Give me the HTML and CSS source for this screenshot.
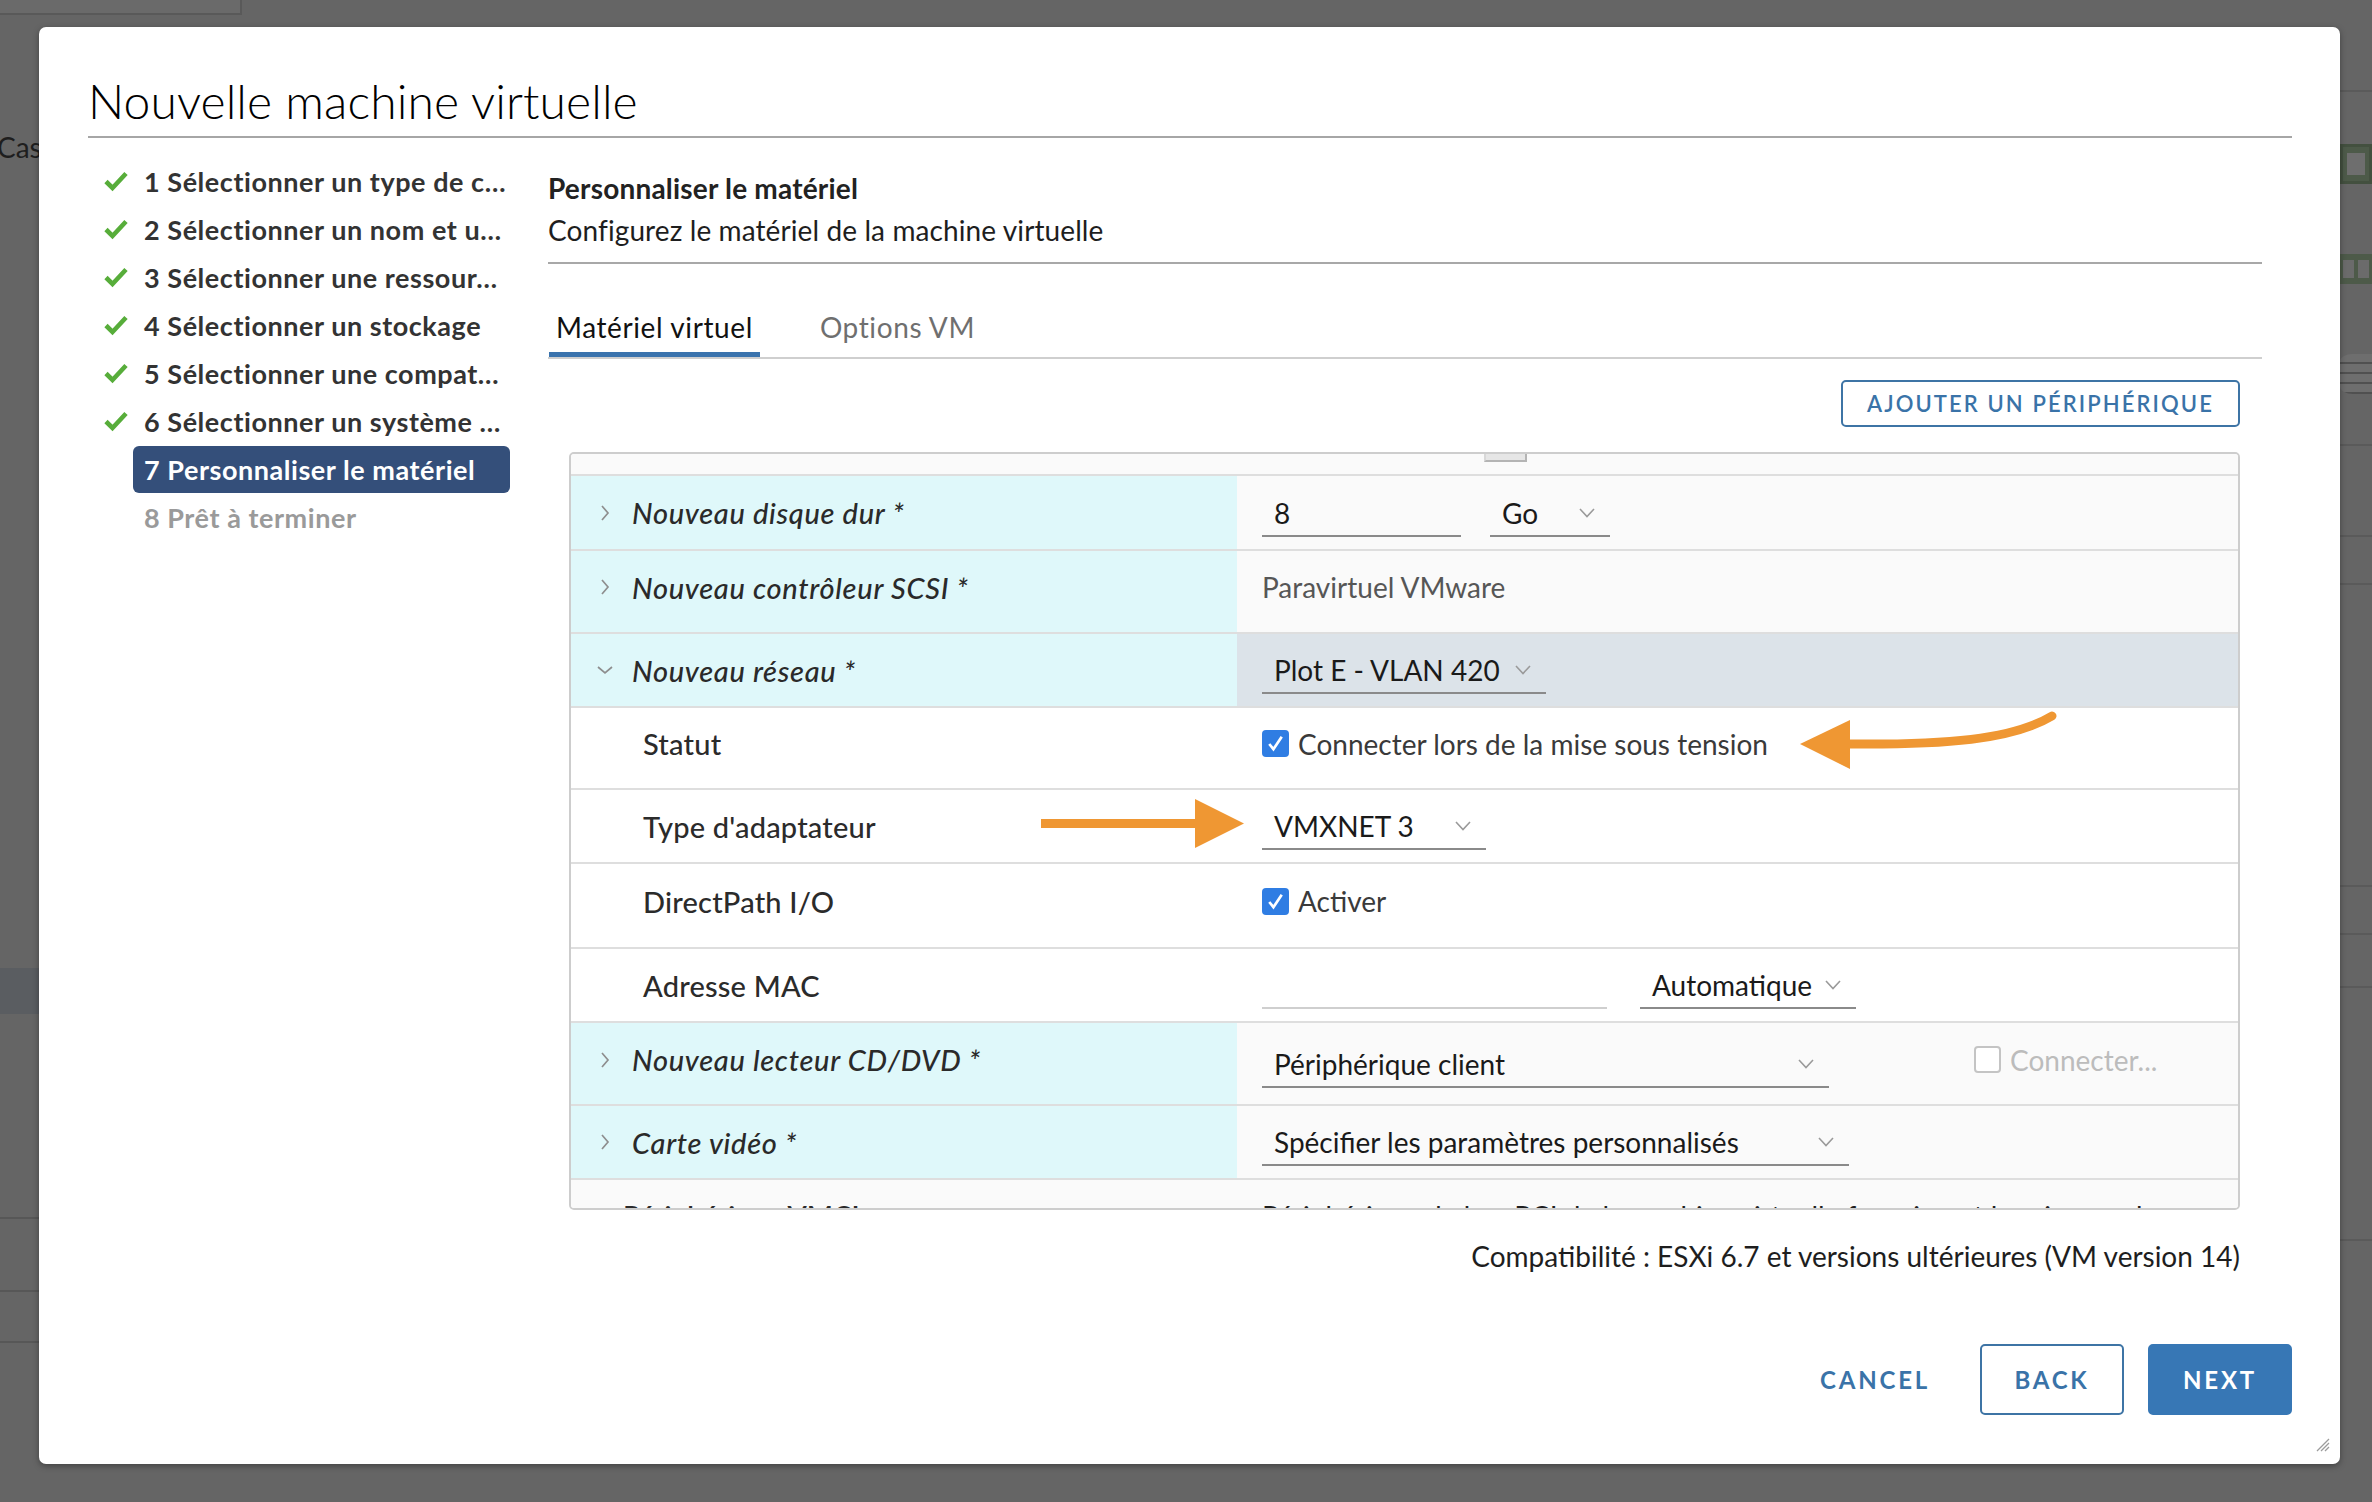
FILE: index.html
```html
<!DOCTYPE html>
<html lang="fr">
<head>
<meta charset="utf-8">
<title>Nouvelle machine virtuelle</title>
<link rel="stylesheet" href="styles.css">
</head>
<body>
<div class="backdrop">
  <div class="bd-left">
    <div class="bd-top"></div>
    <div class="bd-cas">Cas-</div>
    <div class="bd-band"></div>
    <div class="bd-line bl1"></div>
    <div class="bd-line bl2"></div>
    <div class="bd-line bl3"></div>
  </div>
  <div class="bd-right">
    <div class="br-line br1"></div>
    <div class="br-chip"><span></span></div>
    <div class="br-dots"><span></span><span></span></div>
    <div class="br-db"></div>
    <div class="br-line br2"></div>
    <div class="br-line br3"></div>
    <div class="br-line br4"></div>
    <div class="br-line br5"></div>
    <div class="br-line br6"></div>
    <div class="br-line br7"></div>
    <div class="br-line br8"></div>
  </div>
</div>

<div class="modal">
  <header class="modal-header">
    <h1 class="modal-title">Nouvelle machine virtuelle</h1>
  </header>

  <div class="modal-body">
    <nav class="steps">
      <div class="step done">
        <svg class="check" viewBox="0 0 26 22"><path d="M3 11.5 L9.5 18 L23 3.5"/></svg>
        <span class="step-label">1 Sélectionner un type de c…</span>
      </div>
      <div class="step done">
        <svg class="check" viewBox="0 0 26 22"><path d="M3 11.5 L9.5 18 L23 3.5"/></svg>
        <span class="step-label">2 Sélectionner un nom et u…</span>
      </div>
      <div class="step done">
        <svg class="check" viewBox="0 0 26 22"><path d="M3 11.5 L9.5 18 L23 3.5"/></svg>
        <span class="step-label">3 Sélectionner une ressour…</span>
      </div>
      <div class="step done">
        <svg class="check" viewBox="0 0 26 22"><path d="M3 11.5 L9.5 18 L23 3.5"/></svg>
        <span class="step-label">4 Sélectionner un stockage</span>
      </div>
      <div class="step done">
        <svg class="check" viewBox="0 0 26 22"><path d="M3 11.5 L9.5 18 L23 3.5"/></svg>
        <span class="step-label">5 Sélectionner une compat…</span>
      </div>
      <div class="step done">
        <svg class="check" viewBox="0 0 26 22"><path d="M3 11.5 L9.5 18 L23 3.5"/></svg>
        <span class="step-label">6 Sélectionner un système …</span>
      </div>
      <div class="step active">
        <span class="check-space"></span>
        <span class="step-label">7 Personnaliser le matériel</span>
      </div>
      <div class="step todo">
        <span class="check-space"></span>
        <span class="step-label">8 Prêt à terminer</span>
      </div>
    </nav>

    <main class="content">
      <div class="page-head">
        <h2 class="page-title">Personnaliser le matériel</h2>
        <p class="page-desc">Configurez le matériel de la machine virtuelle</p>
      </div>

      <div class="tabs">
        <div class="tab active">Matériel virtuel</div>
        <div class="tab">Options VM</div>
      </div>

      <div class="pane">
        <div class="toolbar">
          <button class="btn btn-outline btn-add">Ajouter un périphérique</button>
        </div>

        <div class="hw">
          <div class="row r-top"><span class="nub"></span></div>

          <div class="row dev h73">
            <div class="lbl"><svg class="chev" viewBox="0 0 10 18"><path d="M2 2 L8 9 L2 16"/></svg><span>Nouveau disque dur *</span></div>
            <div class="val">
              <div class="field w199">8</div>
              <div class="field w120"><span>Go</span><svg class="dd" viewBox="0 0 16 10"><path d="M1 1 L8 8.5 L15 1"/></svg></div>
            </div>
          </div>

          <div class="row dev h81 up">
            <div class="lbl"><svg class="chev" viewBox="0 0 10 18"><path d="M2 2 L8 9 L2 16"/></svg><span>Nouveau contrôleur SCSI *</span></div>
            <div class="val"><span class="muted">Paravirtuel VMware</span></div>
          </div>

          <div class="row dev open h72">
            <div class="lbl"><svg class="chev down" viewBox="0 0 18 10"><path d="M2 2 L9 8 L16 2"/></svg><span>Nouveau réseau *</span></div>
            <div class="val">
              <div class="field w284"><span>Plot E - VLAN 420</span><svg class="dd" viewBox="0 0 16 10"><path d="M1 1 L8 8.5 L15 1"/></svg></div>
            </div>
          </div>

          <div class="row sub h80 up">
            <div class="lbl"><span>Statut</span></div>
            <div class="val">
              <span class="cb"><svg viewBox="0 0 26 26"><path d="M7 13.5 L11 18.5 L19 6.5"/></svg></span>
              <span class="cb-text">Connecter lors de la mise sous tension</span>
            </div>
          </div>

          <div class="row sub h72">
            <div class="lbl"><span>Type d'adaptateur</span></div>
            <div class="val">
              <div class="field w224"><span>VMXNET 3</span><svg class="dd" viewBox="0 0 16 10"><path d="M1 1 L8 8.5 L15 1"/></svg></div>
            </div>
          </div>

          <div class="row sub h83 up">
            <div class="lbl"><span>DirectPath I/O</span></div>
            <div class="val">
              <span class="cb"><svg viewBox="0 0 26 26"><path d="M7 13.5 L11 18.5 L19 6.5"/></svg></span>
              <span class="cb-text">Activer</span>
            </div>
          </div>

          <div class="row sub h72">
            <div class="lbl"><span>Adresse MAC</span></div>
            <div class="val">
              <div class="field light w345"></div>
              <div class="field w216 gap33"><span>Automatique</span><svg class="dd" viewBox="0 0 16 10"><path d="M1 1 L8 8.5 L15 1"/></svg></div>
            </div>
          </div>

          <div class="row dev h81">
            <div class="lbl up8"><svg class="chev" viewBox="0 0 10 18"><path d="M2 2 L8 9 L2 16"/></svg><span>Nouveau lecteur CD/DVD *</span></div>
            <div class="val">
              <div class="field w567"><span>Périphérique client</span><svg class="dd" viewBox="0 0 16 10"><path d="M1 1 L8 8.5 L15 1"/></svg></div>
              <span class="cb off"></span>
              <span class="cb-text off">Connecter...</span>
            </div>
          </div>

          <div class="row dev h72">
            <div class="lbl"><svg class="chev" viewBox="0 0 10 18"><path d="M2 2 L8 9 L2 16"/></svg><span>Carte vidéo *</span></div>
            <div class="val">
              <div class="field w587"><span>Spécifier les paramètres personnalisés</span><svg class="dd" viewBox="0 0 16 10"><path d="M1 1 L8 8.5 L15 1"/></svg></div>
            </div>
          </div>

          <div class="row last">
            <div class="lbl"><span>Périphérique VMCI</span></div>
            <div class="val"><span>Périphérique de bus PCI de la machine virtuelle fournissant la prise en charge</span></div>
          </div>
        </div>

        <div class="compat">Compatibilité : ESXi 6.7 et versions ultérieures (VM version 14)</div>
      </div>
    </main>
  </div>

  <footer class="modal-footer">
    <button class="btn btn-link">Cancel</button>
    <button class="btn btn-outline">Back</button>
    <button class="btn btn-primary">Next</button>
  </footer>

  <svg class="grip" viewBox="0 0 16 16"><path d="M15 3 L3 15 M15 7 L7 15 M15 11 L11 15"/></svg>
</div>

<svg class="annot" viewBox="0 0 2372 1502" width="2372" height="1502">
  <rect x="1041" y="819" width="160" height="9" fill="#ef9733"/>
  <polygon points="1195,799 1244,823.5 1195,848" fill="#ef9733"/>
  <path d="M1846 744 C 1945 745, 2012 740, 2052 716" fill="none" stroke="#ef9733" stroke-width="9" stroke-linecap="round"/>
  <polygon points="1850,720 1800,744 1850,769" fill="#ef9733"/>
</svg>
</body>
</html>
```

FILE: styles.css
```css
* { box-sizing: border-box; }

html, body {
  margin: 0;
  padding: 0;
}

body {
  width: 2372px;
  height: 1502px;
  overflow: hidden;
  background: #656565;
  font-family: Lato, "Open Sans", "DejaVu Sans", sans-serif;
  color: #2b2b2b;
  position: relative;
}

/* ---------- dimmed page behind the modal ---------- */
.backdrop {
  display: flex;
  justify-content: space-between;
  height: 1502px;
}

.bd-left {
  width: 300px;
  display: flex;
  flex-direction: column;
}

.bd-top {
  width: 242px;
  height: 15px;
  border-bottom: 2px solid #595959;
  border-right: 2px solid #595959;
  background: #6a6a6a;
}

.bd-cas {
  margin-top: 115px;
  margin-left: -3px;
  font-size: 28px;
  line-height: 34px;
  color: #1e1e1e;
}

.bd-band {
  margin-top: 804px;
  height: 46px;
  background: #5a5d61;
}

.bd-line {
  height: 2px;
  background: #575757;
}
.bl1 { margin-top: 203px; }
.bl2 { margin-top: 71px; }
.bl3 { margin-top: 49px; }

.bd-right {
  width: 32px;
  display: flex;
  flex-direction: column;
}

.br-line {
  height: 2px;
  background: #5a5a5a;
}
.br1 { margin-top: 90px; }

.br-chip {
  margin-top: 52px;
  height: 40px;
  background: #4d5a49;
  border: 3px solid #43503f;
  padding: 6px 4px;
}
.br-chip span {
  display: block;
  height: 100%;
  background: #6e6e6e;
}

.br-dots {
  margin-top: 70px;
  height: 30px;
  background: #4d5a49;
  display: flex;
  gap: 4px;
  padding: 6px 3px;
}
.br-dots span {
  flex: 1;
  background: #6b6b6b;
}

.br-db {
  margin-top: 70px;
  height: 40px;
  border-radius: 40% 0 0 40% / 20% 0 0 20%;
  background: repeating-linear-gradient(#6e6e6e 0 8px, #505050 8px 10px);
}

.br2 { margin-top: 50px; }
.br3 { margin-top: 89px; }
.br4 { margin-top: 46px; }
.br5 { margin-top: 300px; }
.br6 { margin-top: 46px; }
.br7 { margin-top: 51px; }
.br8 { margin-top: 251px; }

/* ---------- modal ---------- */
.modal {
  position: absolute;
  left: 39px;
  top: 27px;
  width: 2301px;
  height: 1437px;
  background: #fff;
  border-radius: 7px;
  box-shadow: 0 2px 6px rgba(0, 0, 0, 0.35);
  display: flex;
  flex-direction: column;
  padding: 0 48px 0 49px;
}

.modal-header {
  padding-top: 45px;
  padding-bottom: 6px;
  border-bottom: 2px solid #a6a6a6;
}

.modal-title {
  margin: 0;
  font-size: 48px;
  font-weight: 300;
  line-height: 58px;
  color: #000;
  letter-spacing: 0.1px;
}

.modal-body {
  flex: 1;
  display: flex;
  min-height: 0;
}

/* ---------- steps ---------- */
.steps {
  width: 445px;
  flex: none;
  margin-left: 15px;
  padding-top: 19px;
  display: flex;
  flex-direction: column;
}

.step {
  display: flex;
  align-items: center;
  height: 48px;
}

.check {
  width: 26px;
  height: 22px;
  flex: none;
  margin-right: 4px;
}
.check path {
  fill: none;
  stroke: #57ad3a;
  stroke-width: 4.6;
  stroke-linejoin: miter;
}

.check-space {
  width: 30px;
  flex: none;
}

.step-label {
  width: 377px;
  height: 47px;
  display: flex;
  align-items: center;
  padding-left: 11px;
  border-radius: 6px;
  font-size: 27px;
  font-weight: 700;
  letter-spacing: 0.55px;
  color: #333;
  white-space: nowrap;
  overflow: hidden;
}

.step.active .step-label {
  background: #344f7a;
  color: #fff;
}

.step.todo .step-label {
  color: #9a9a9a;
}

/* ---------- content ---------- */
.content {
  flex: 1;
  min-width: 0;
  margin-right: 30px;
  display: flex;
  flex-direction: column;
}

.page-head {
  padding-top: 33px;
  padding-bottom: 15px;
  border-bottom: 2px solid #a8a8a8;
}

.page-title {
  margin: 0;
  font-size: 28px;
  font-weight: 700;
  letter-spacing: 0.2px;
  line-height: 34px;
  color: #222;
}

.page-desc {
  margin: 8px 0 0;
  font-size: 28px;
  letter-spacing: 0.1px;
  line-height: 34px;
  color: #1e1e1e;
}

.tabs {
  margin-top: 32px;
  display: flex;
  border-bottom: 2px solid #cfcfcf;
}

.tab {
  height: 61px;
  display: flex;
  align-items: center;
  padding: 0 7px;
  margin-left: 1px;
  margin-right: 52px;
  font-size: 28px;
  letter-spacing: 0.6px;
  color: #6f6f6f;
}

.tab.active {
  color: #111;
  box-shadow: inset 0 -5px 0 #3a73ad;
}

.pane {
  padding: 0 22px 0 21px;
  display: flex;
  flex-direction: column;
}

.toolbar {
  display: flex;
  justify-content: flex-end;
  margin-top: 21px;
}

/* ---------- buttons ---------- */
.btn {
  font-family: Lato, "Open Sans", sans-serif;
  text-transform: uppercase;
  font-weight: 700;
  cursor: pointer;
  border-radius: 5px;
  background: #fff;
  color: #3a73a8;
}

.btn-add {
  height: 47px;
  width: 399px;
  border: 2px solid #3e74a5;
  font-size: 22px;
  font-weight: 600;
  letter-spacing: 2.1px;
  padding: 0;
}

.modal-footer {
  display: flex;
  justify-content: flex-end;
  gap: 24px;
  padding-bottom: 49px;
}

.modal-footer .btn {
  height: 71px;
  min-width: 144px;
  padding: 0 24px;
  font-size: 24px;
  letter-spacing: 2.8px;
  border: 2px solid #3e74a5;
}

.btn-link {
  border-color: transparent !important;
  background: transparent;
}

.btn-primary {
  background: #3777b5;
  border-color: #3777b5 !important;
  color: #fff;
}

/* ---------- hardware table ---------- */
.hw {
  margin-top: 25px;
  height: 758px;
  border: 2px solid #cdcdcd;
  border-radius: 5px;
  overflow: hidden;
  display: flex;
  flex-direction: column;
  background: #fafafa;
}

.row {
  flex: none;
  display: flex;
  border-top: 2px solid #dedede;
  font-size: 28px;
}

.r-top {
  border-top: none;
  height: 20px;
  background: #fafafa;
}

.nub {
  margin-left: 913px;
  width: 43px;
  height: 8px;
  background: #e6e6e6;
  border: 2px solid #b4b4b4;
  border-top: none;
  border-left-color: #d8d8d8;
}

.h72 { height: 74px; }
.h73 { height: 75px; }
.h80 { height: 82px; }
.h81 { height: 83px; }
.h83 { height: 85px; }

.lbl {
  width: 666px;
  flex: none;
  display: flex;
  align-items: center;
}

.val {
  flex: 1;
  display: flex;
  align-items: center;
  padding-left: 25px;
  color: #1e1e1e;
}

.row.up .lbl,
.row.up .val {
  padding-bottom: 9px;
}
.lbl.up8 { padding-bottom: 8px; }

.dev .lbl {
  background: #dff8fa;
  padding-left: 29px;
  font-style: italic;
  font-weight: 500;
  font-size: 29px;
  letter-spacing: 0.7px;
  color: #2a2a2a;
}

.dev .val { background: #fafafa; }
.dev.open .val { background: #dce3e9; }

.sub { background: #fff; }
.sub .lbl {
  padding-left: 72px;
  font-weight: 500;
  font-size: 29px;
  letter-spacing: 0.2px;
  color: #2b2b2b;
}

.chev {
  width: 10px;
  height: 18px;
  margin-right: 22px;
  flex: none;
}
.chev.down {
  width: 18px;
  height: 10px;
  margin-left: -4px;
  margin-right: 18px;
}
.chev path {
  fill: none;
  stroke: #8e8e8e;
  stroke-width: 1.7;
}

.muted { color: #565656; }

.field {
  height: 48px;
  border-bottom: 2px solid #8a8a8a;
  display: flex;
  align-items: center;
  padding: 2px 15px 0 12px;
  margin-right: 29px;
  color: #1a1a1a;
  white-space: nowrap;
}
.field.light { border-bottom-color: #cfcfcf; }
.field.gap33 { margin-left: 4px; }

.w120 { width: 120px; }
.w199 { width: 199px; }
.w216 { width: 216px; }
.w224 { width: 224px; }
.w284 { width: 284px; }
.w345 { width: 345px; }
.w567 { width: 567px; }
.w587 { width: 587px; }

.dd {
  width: 16px;
  height: 10px;
  margin-left: auto;
  flex: none;
}
.dd path {
  fill: none;
  stroke: #9a9a9a;
  stroke-width: 1.6;
}

.cb {
  width: 27px;
  height: 27px;
  border-radius: 4px;
  background: #2f7de3;
  display: inline-flex;
  flex: none;
}
.cb svg { width: 27px; height: 27px; }
.cb path {
  fill: none;
  stroke: #fff;
  stroke-width: 2.6;
}
.cb.off {
  background: #fff;
  border: 2px solid #c4c4c4;
  margin-left: 116px;
  margin-bottom: 8px;
}

.cb-text {
  margin-left: 9px;
  color: #3a3a3a;
}
.cb-text.off {
  color: #bcbcbc;
  margin-bottom: 8px;
}

.row.last {
  height: 60px;
  background: #fafafa;
}
.row.last .lbl {
  padding-left: 52px;
  padding-top: 19px;
  align-items: flex-start;
  font-weight: 600;
  color: #2a2a2a;
}
.row.last .val {
  align-items: flex-start;
  padding-top: 19px;
  white-space: nowrap;
}

.compat {
  margin-top: 29px;
  text-align: right;
  font-size: 28px;
  line-height: 34px;
  color: #1e1e1e;
}

/* ---------- overlays ---------- */
.grip {
  position: absolute;
  right: 10px;
  bottom: 12px;
  width: 16px;
  height: 16px;
}
.grip path {
  fill: none;
  stroke: #9c9c9c;
  stroke-width: 1.3;
}

.annot {
  position: absolute;
  left: 0;
  top: 0;
  pointer-events: none;
}
```
